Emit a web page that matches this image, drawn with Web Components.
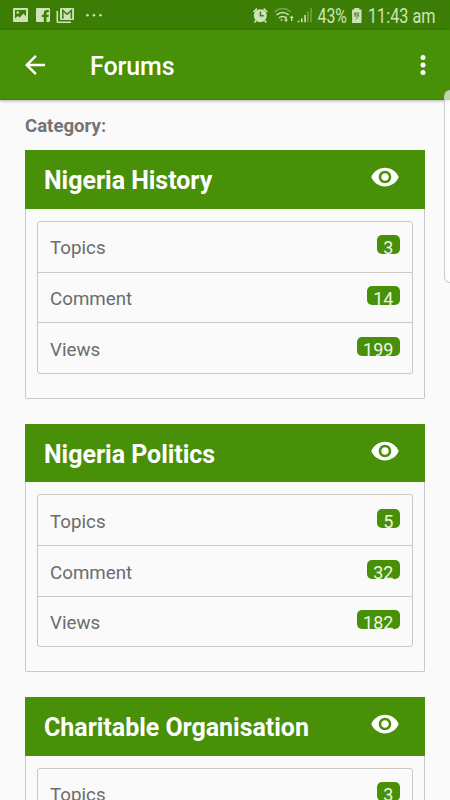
<!DOCTYPE html>
<html lang="en">
<head>
<meta charset="utf-8">
<title>Forums</title>
<style>
  html, body {
    margin: 0;
    height: 800px;
    overflow: hidden;
    background: #fafafa;
  }
  body {
    font-family: Roboto, "Liberation Sans", sans-serif;
    --green: #489008;
  }
</style>
</head>
<body>
<forum-app></forum-app>

<script>
// small helper, every element below uses an open shadow root
function attach(el, html) {
  const template = document.createElement('template');
  template.innerHTML = html;
  el.attachShadow({ mode: 'open' }).appendChild(template.content.cloneNode(true));
}

class StatusBar extends HTMLElement {
  constructor() {
    super();
    attach(this, `
      <style>
        :host { display: block; height: 30px; background: #3c7d06; }
        svg { display: block; }
        text { font-size: 19.500px; fill: #d0e4b9; }
      </style>
      <svg width="450" height="30" viewBox="0 0 450 30" fill="#cfe2ba">
        <!-- picture -->
        <path fill-rule="evenodd" d="M14 8h13q1 0 1 1v12q0 1-1 1H14q-1 0-1-1V9q0-1 1-1zM15 10v8.500l2.800-2.500 2 1.500 3.700-4 2.500 3V10z"/>
        <circle cx="17.800" cy="12.500" r="1.300"/>
        <!-- facebook -->
        <path fill-rule="evenodd" d="M37 8h12q1 0 1 1v12q0 1-1 1h-2.500v-5h2l.3-2.300h-2.300v-1.500q0-1 1-1h1.300V9.900h-2q-3 0-3 3v1.800h-2V17h2v5H37q-1 0-1-1V9q0-1 1-1z"/>
        <!-- mail -->
        <path d="M56.500 11h1.600v10.400H71V23H58q-1.500 0-1.500-1.500z"/>
        <path d="M61 8h12q1 0 1 1v10q0 1-1 1H61q-1 0-1-1V9q0-1 1-1z"/>
        <path d="M62.800 18.800V10.500l4.300 3.800 4.300-3.800v8.300" fill="none" stroke="#3c7d06" stroke-width="1.500"/>
        <circle cx="87.500" cy="15.300" r="1.300"/><circle cx="94" cy="15.300" r="1.300"/><circle cx="100.500" cy="15.300" r="1.300"/>
        <!-- alarm -->
        <path fill-rule="evenodd" d="M260.300 9.200a6.500 6.500 0 1 1 0 13a6.500 6.500 0 1 1 0-13zM259.700 11.500v5h4v-1.400h-2.500v-3.600z"/>
        <path d="M253.500 12l3.500-3.300M267.200 12l-3.500-3.300M256 20.500l-1.500 2M264.700 20.500l1.500 2" fill="none" stroke="#cfe2ba" stroke-width="1.700"/>
        <!-- wifi -->
        <g fill="none" stroke="#cfe2ba" stroke-width="1.500">
          <path d="M274.500 11.800q8-6.500 16.200 0" stroke="#79a553"/>
          <path d="M276.500 14.800q6.200-4.800 12.200 0"/>
          <path d="M279 17.800q3.700-2.800 7 0"/>
        </g>
        <path d="M280.300 19.700q1.400-.8 2.600 0l-1.300 1.600zM285.400 16.500h1.300v3h1.400l-2.050 2.500-2.050-2.500h1.400zM292.300 21h-1.300v-3h-1.400l2.050-2.500 2.050 2.500h-1.400z"/>
        <!-- signal -->
        <path d="M297 22.300h2.300v-2.300zM301 18.500h1.600v3.800H301zM304.300 15h1.600v7.300h-1.600z"/>
        <path fill="#79a553" d="M307.300 11.500h1.400v10.800h-1.400zM310.300 8h1.400v14.300h-1.400z"/>
        <text x="317.500" y="23" textLength="29.500" lengthAdjust="spacingAndGlyphs">43%</text>
        <!-- battery -->
        <path d="M354.300 8h5v1.600h2.200V23h-9.400V9.600h2.200z"/>
        <path d="M354.200 12.500h5.300l-1.300 3h1.500l-4.200 5 .8-3.700h-2.100z" fill="#5c8b37"/>
        <path d="M357.500 13l-2 3.200h2l-1.200 2.500" fill="none" stroke="#cfe2ba" stroke-width=".7"/>
        <text x="368" y="23" textLength="67.500" lengthAdjust="spacingAndGlyphs">11:43 am</text>
      </svg>
    `);
  }
}
customElements.define('status-bar', StatusBar);

class AppBar extends HTMLElement {
  constructor() {
    super();
    attach(this, `
      <style>
        :host {
          display: flex;
          align-items: center;
          box-sizing: border-box;
          height: 70px;
          padding: 0 12.500px 0 20px;
          color: #fff;
          background: var(--green);
          border-bottom: 1px solid #3f8207;
          box-shadow: 0 1px 3px rgba(0, 0, 0, .3);
        }
        h1 { flex: 1; margin: 4px 0 0 40px; font-size: 25px; line-height: 30px; font-weight: 500; letter-spacing: -.1px; }
        svg { display: block; margin-top: 1px; }
      </style>
      <svg width="30" height="30" viewBox="0 0 24 24" fill="#fff"><path d="M20 11H7.830l5.590-5.590L12 4l-8 8 8 8 1.410-1.410L7.830 13H20z"/></svg>
      <h1><slot></slot></h1>
      <svg width="30" height="30" viewBox="0 0 24 24" fill="#fff"><circle cx="12" cy="6" r="2"/><circle cx="12" cy="12" r="2"/><circle cx="12" cy="18" r="2"/></svg>
    `);
  }
}
customElements.define('app-bar', AppBar);

class StatRow extends HTMLElement {
  constructor() {
    super();
    attach(this, `
      <style>
        :host {
          display: flex;
          justify-content: space-between;
          box-sizing: border-box;
          height: 50.800px;
          padding: 13.500px 12.300px 0 12px;
          font-size: 18.750px;
          line-height: 26px;
          color: #6c6c6c;
          border-bottom: 1px solid #c9c9c9;
        }
        :host(:last-child) { border-bottom: 0; }
        /* the badge is shorter than its line, the digits are cut at the bottom */
        .badge {
          height: 19px;
          padding: 0 6.300px;
          border-radius: 5px;
          overflow: hidden;
          font-size: 18px;
          line-height: 26.500px;
          color: #edf6e2;
          background: var(--green);
        }
      </style>
      <span><slot></slot></span>
      <span class="badge"></span>
    `);
  }

  connectedCallback() {
    this.shadowRoot.querySelector('.badge').textContent = this.getAttribute('count');
  }
}
customElements.define('stat-row', StatRow);

class ForumCard extends HTMLElement {
  constructor() {
    super();
    attach(this, `
      <style>
        :host {
          display: block;
          box-sizing: border-box;
          height: 248.400px;
          border: 1px solid #c8c8c8;
          border-top: 0;
          border-radius: 0 0 2px 2px;
        }
        header {
          display: flex;
          justify-content: space-between;
          box-sizing: border-box;
          height: 58.500px;
          margin: 0 -1px;
          padding: 12px 25px 0 19px;
          color: #fff;
          background: var(--green);
        }
        h2 { margin: 4px 0 0; font-size: 25px; line-height: 30px; font-weight: 700; letter-spacing: -.03px; }
        svg { display: block; }
        .list {
          box-sizing: border-box;
          height: 153px;
          margin: 12px 11px 0;
          border: 1px solid #c8c8c8;
          border-radius: 3px;
        }
      </style>
      <header>
        <h2></h2>
        <svg width="30" height="30" viewBox="0 0 24 24" fill="#fff"><path d="M12 4.500C7 4.500 2.730 7.610 1 12c1.730 4.390 6 7.500 11 7.500s9.270-3.110 11-7.500c-1.730-4.390-6-7.500-11-7.500zM12 17c-2.760 0-5-2.240-5-5s2.240-5 5-5 5 2.240 5 5-2.240 5-5 5zm0-8c-1.660 0-3 1.340-3 3s1.340 3 3 3 3-1.340 3-3-1.340-3-3-3z"/></svg>
      </header>
      <div class="list"><slot></slot></div>
    `);
  }

  connectedCallback() {
    this.shadowRoot.querySelector('h2').textContent = this.getAttribute('name');
  }
}
customElements.define('forum-card', ForumCard);

const forums = [
  { name: 'Nigeria History', topics: 3, comment: 14, views: 199 },
  { name: 'Nigeria Politics', topics: 5, comment: 32, views: 182 },
  { name: 'Charitable Organisation', topics: 3 }
];

class ForumApp extends HTMLElement {
  constructor() {
    super();
    attach(this, `
      <style>
        :host { display: block; position: relative; height: 800px; overflow: hidden; }
        main { padding: 12px 25px 0; }
        .label { height: 38.400px; font-size: 18.600px; line-height: 29px; font-weight: 700; color: #737373; }
        .cards { display: flex; flex-direction: column; gap: 25px; }
        forum-card { flex: none; }
        /* edge panel handle, lies over the app bar and the page */
        .handle {
          position: absolute;
          left: 444px;
          top: 90px;
          box-sizing: border-box;
          width: 14px;
          height: 193px;
          border: 1px solid rgba(190, 190, 190, .8);
          border-radius: 6px;
          background: rgba(255, 255, 255, .65);
        }
      </style>
      <status-bar></status-bar>
      <app-bar>Forums</app-bar>
      <main>
        <div class="label">Category:</div>
        <div class="cards"></div>
      </main>
      <div class="handle"></div>
    `);
  }

  connectedCallback() {
    this.shadowRoot.querySelector('.cards').innerHTML = forums.map((f) => `
      <forum-card name="${f.name}">
        <stat-row count="${f.topics}">Topics</stat-row>
        ${f.comment ? `<stat-row count="${f.comment}">Comment</stat-row>` : ''}
        ${f.views ? `<stat-row count="${f.views}">Views</stat-row>` : ''}
      </forum-card>
    `).join('');
  }
}
customElements.define('forum-app', ForumApp);
</script>
</body>
</html>
